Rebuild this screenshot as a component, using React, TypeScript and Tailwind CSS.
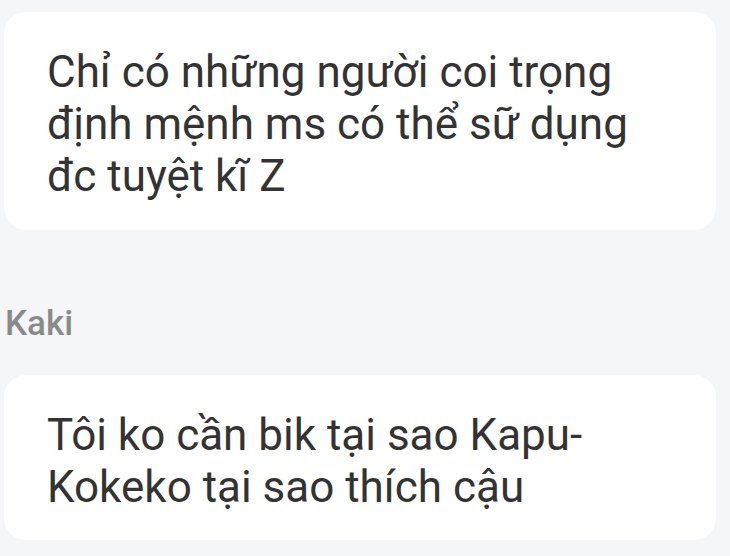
export default function App() {
  return (
    <div className="min-h-[556px] w-[730px] bg-[#f5f6f8] pt-[12px] font-['Roboto',sans-serif] text-[#333333]">
      <div className="ml-[4px] mr-[14px] rounded-[22px] bg-white pl-[43px] pr-4 pt-[34px] pb-[28px] text-[44px] leading-[52px]">
        Chỉ có những người coi trọng
        <br />
        định mệnh ms có thể sữ dụng
        <br />
        đc tuyệt kĩ Z
      </div>

      <div className="mt-[74px] pl-[5px] text-[35px] font-medium leading-[40px] text-[#8a8a8a]">Kaki</div>

      <div className="mt-[31px] ml-[4px] mr-[14px] rounded-[22px] bg-white pl-[43px] pr-4 pt-[34px] pb-[27px] text-[44px] leading-[52px]">
        Tôi ko cần bik tại sao Kapu-
        <br />
        Kokeko tại sao thích cậu
      </div>
    </div>
  )
}
